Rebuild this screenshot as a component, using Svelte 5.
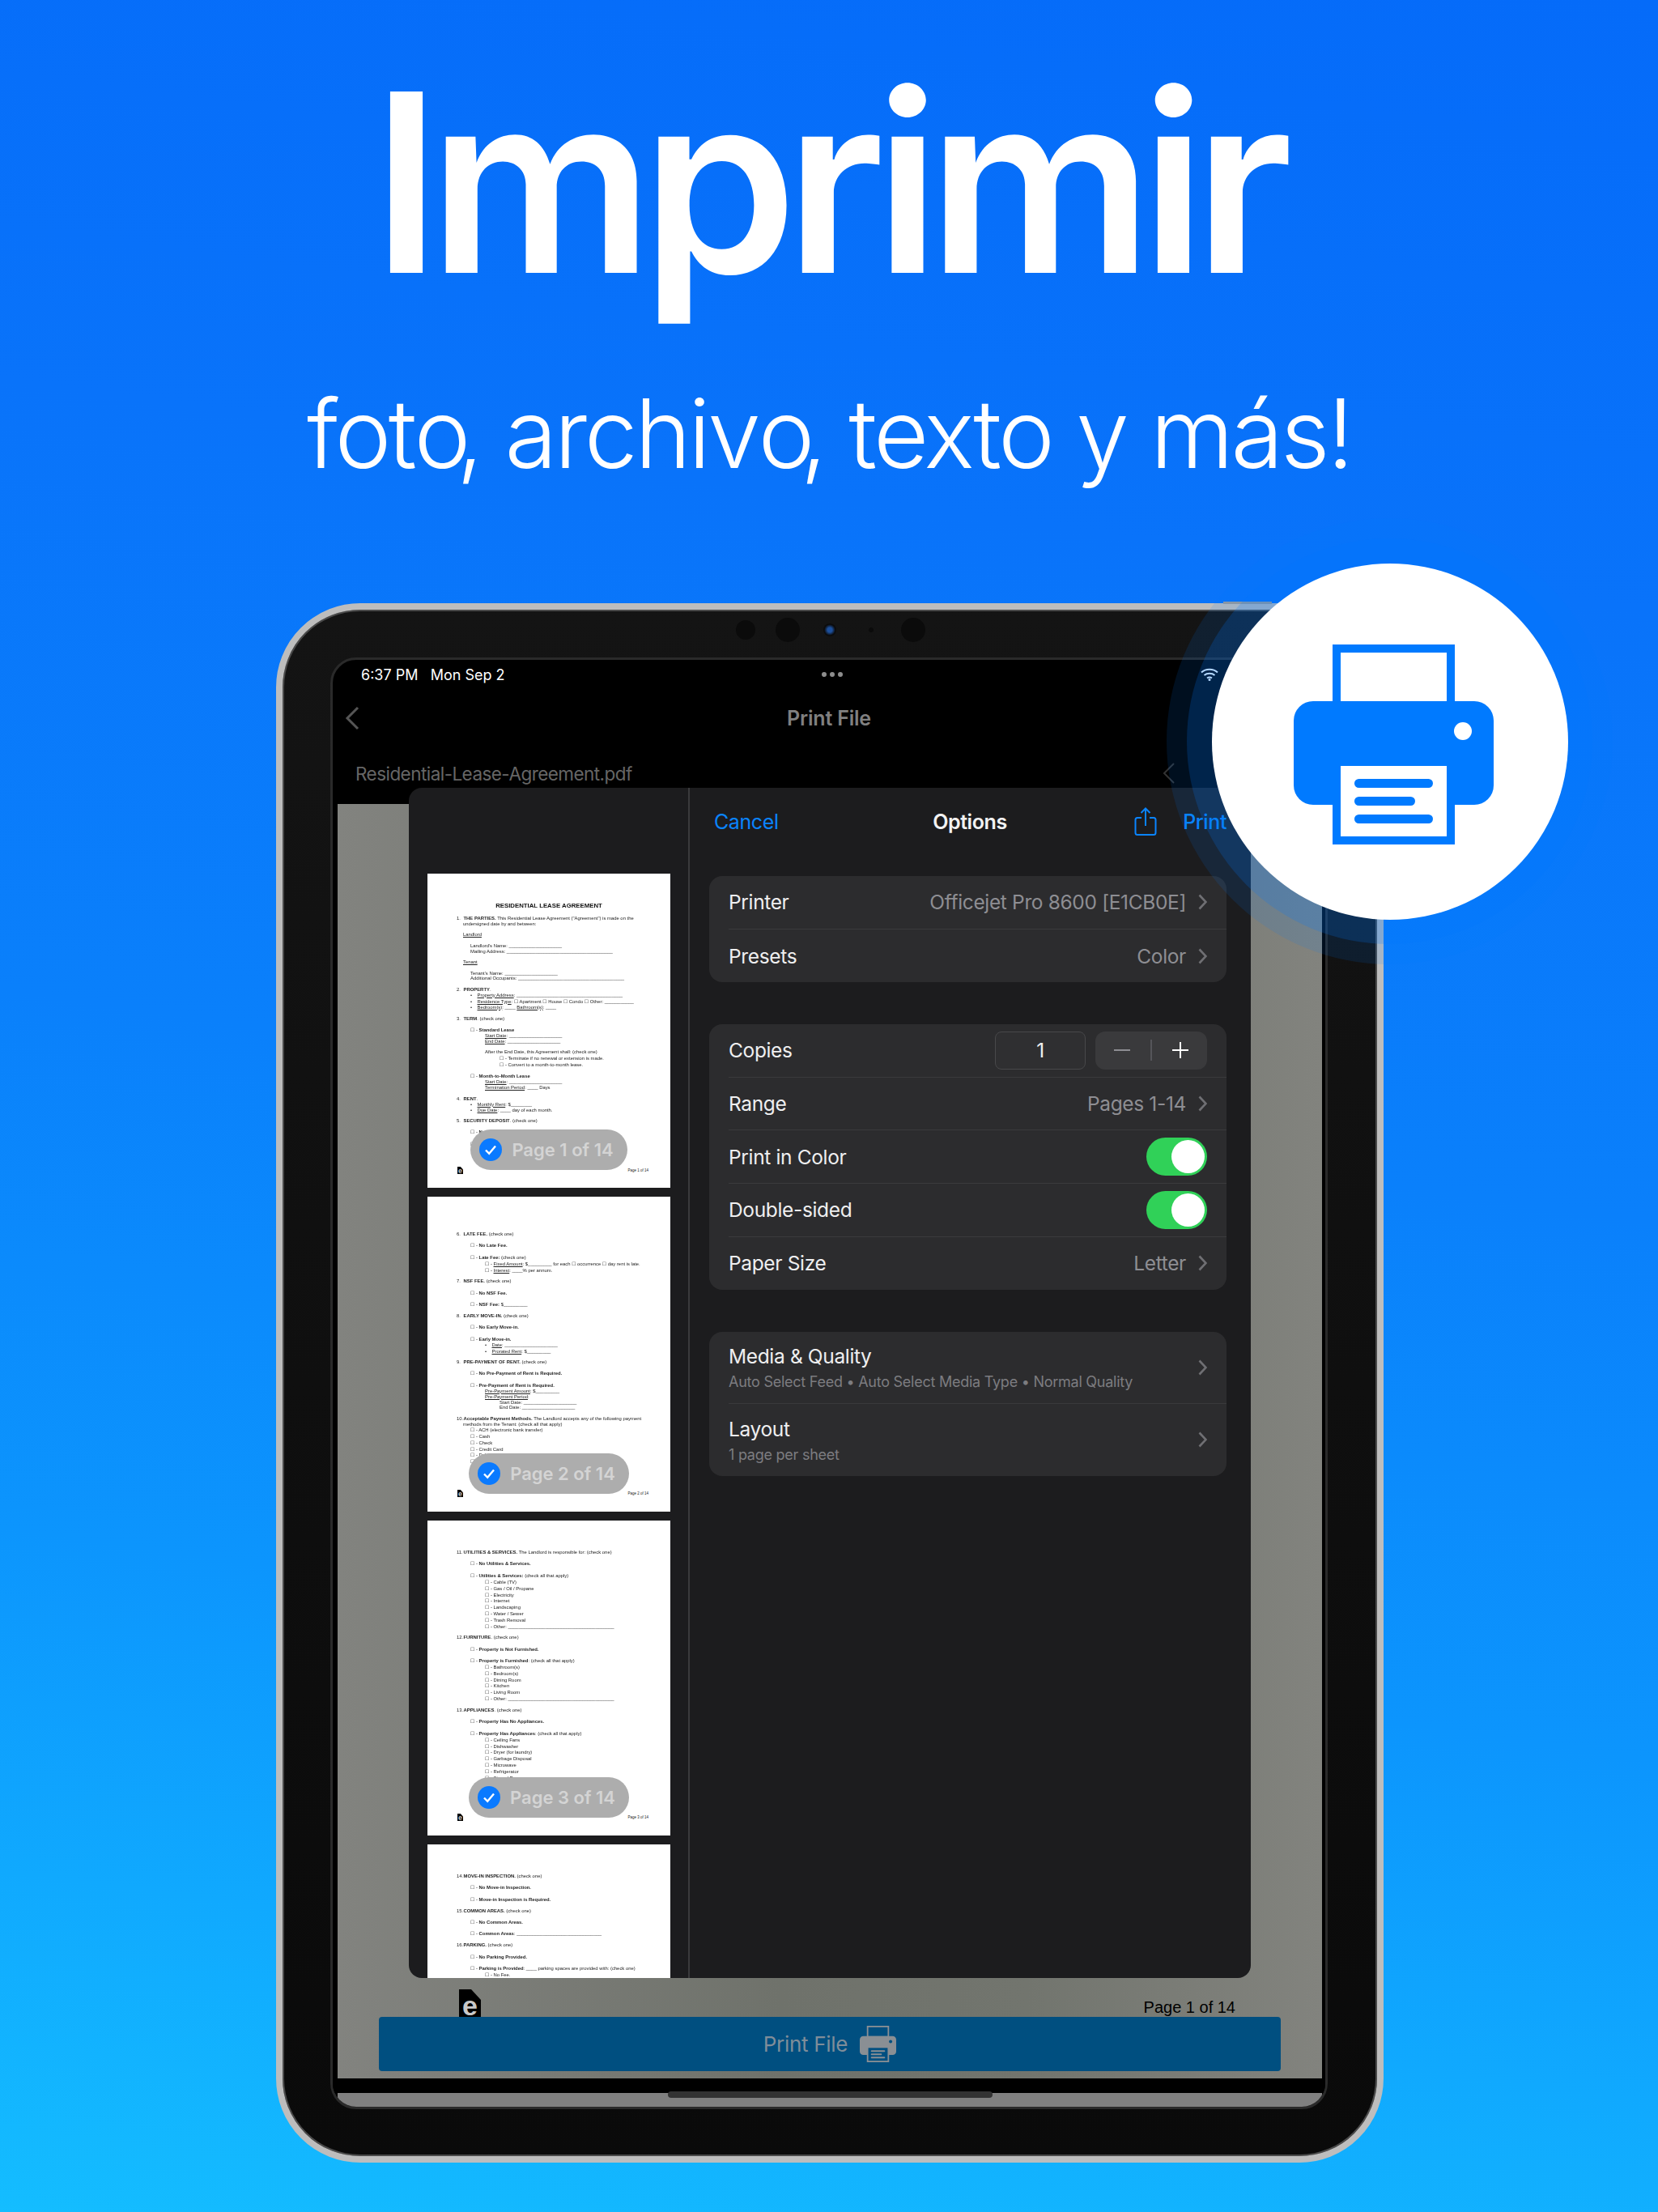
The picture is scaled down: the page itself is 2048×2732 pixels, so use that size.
<script lang="ts">
  type Line = [number, number, string, string?];

  const page1: Line[] = [
    [55, 36, '<b>THE PARTIES.</b> This Residential Lease Agreement ("Agreement") is made on the', '1.'],
    [62, 44, 'undersigned date by and between:'],
    [75, 44, '<u>Landlord</u>'],
    [89, 53, "Landlord's Name: ____________________"],
    [96, 53, 'Mailing Address: ________________________________________'],
    [109, 44, '<u>Tenant</u>'],
    [123, 53, "Tenant's Name: ____________________"],
    [129, 53, 'Additional Occupants: ________________________________________'],
    [143, 36, '<b>PROPERTY</b>.', '2.'],
    [150, 53, '<u>Property Address</u>: ________________________________________', '•'],
    [158, 53, '<u>Residence Type</u>: ☐ Apartment ☐ House ☐ Condo ☐ Other: ___________', '•'],
    [165, 53, '<u>Bedroom(s)</u>: ____ <u>Bathroom(s)</u>: ____', '•'],
    [179, 36, '<b>TERM</b>. (check one)', '3.'],
    [193, 53, '☐ - <b>Standard Lease</b>'],
    [200, 71, '<u>Start Date</u>: ____________________'],
    [207, 71, '<u>End Date</u>: ____________________'],
    [220, 71, 'After the End Date, this Agreement shall: (check one)'],
    [228, 89, '☐ - Terminate if no renewal or extension is made.'],
    [236, 89, '☐ - Convert to a month-to-month lease.'],
    [250, 53, '☐ - <b>Month-to-Month Lease</b>'],
    [257, 71, '<u>Start Date</u>: ____________________'],
    [264, 71, '<u>Termination Period</u>: ____ Days'],
    [278, 36, '<b>RENT</b>.', '4.'],
    [285, 53, '<u>Monthly Rent</u>: $________', '•'],
    [292, 53, '<u>Due Date</u>: ____ day of each month.', '•'],
    [305, 36, '<b>SECURITY DEPOSIT</b>. (check one)', '5.'],
    [319, 53, '☐ - <b>No Security Deposit.</b>'],
    [334, 53, '☐ - <b>Security Deposit</b>']
  ];

  const page2: Line[] = [
    [46, 36, '<b>LATE FEE.</b> (check one)', '6.'],
    [60, 53, '☐ - <b>No Late Fee.</b>'],
    [75, 53, '☐ - <b>Late Fee:</b> (check one)'],
    [83, 71, '☐ - <u>Fixed Amount</u>: $_________ for each ☐ occurrence ☐ day rent is late.'],
    [91, 71, '☐ - <u>Interest</u>: ____% per annum.'],
    [104, 36, '<b>NSF FEE.</b> (check one)', '7.'],
    [119, 53, '☐ - <b>No NSF Fee.</b>'],
    [133, 53, '☐ - <b>NSF Fee:</b> $_________'],
    [147, 36, '<b>EARLY MOVE-IN.</b> (check one)', '8.'],
    [161, 53, '☐ - <b>No Early Move-in.</b>'],
    [176, 53, '☐ - <b>Early Move-in.</b>'],
    [183, 71, '<u>Date</u>: ____________________', '•'],
    [191, 71, '<u>Prorated Rent</u>: $_________', '•'],
    [204, 36, '<b>PRE-PAYMENT OF RENT.</b> (check one)', '9.'],
    [218, 53, '☐ - <b>No Pre-Payment of Rent is Required.</b>'],
    [233, 53, '☐ - <b>Pre-Payment of Rent is Required.</b>'],
    [240, 71, '<u>Pre-Payment Amount</u>: $_________'],
    [247, 71, '<u>Pre-Payment Period</u>:'],
    [254, 89, 'Start Date: ____________________'],
    [260, 89, 'End Date: ____________________'],
    [274, 36, '<b>Acceptable Payment Methods.</b> The Landlord accepts any of the following payment', '10.'],
    [281, 44, 'methods from the Tenant: (check all that apply)'],
    [288, 53, '☐ - ACH (electronic bank transfer)'],
    [296, 53, '☐ - Cash'],
    [304, 53, '☐ - Check'],
    [312, 53, '☐ - Credit Card'],
    [319, 53, '☐ - Debit Card'],
    [327, 53, '☐ - Other']
  ];

  const page3: Line[] = [
    [39, 36, '<b>UTILITIES &amp; SERVICES.</b> The Landlord is responsible for: (check one)', '11.'],
    [53, 53, '☐ - <b>No Utilities &amp; Services.</b>'],
    [68, 53, '☐ - <b>Utilities &amp; Services:</b> (check all that apply)'],
    [76, 71, '☐ - Cable (TV)'],
    [84, 71, '☐ - Gas / Oil / Propane'],
    [92, 71, '☐ - Electricity'],
    [99, 71, '☐ - Internet'],
    [107, 71, '☐ - Landscaping'],
    [115, 71, '☐ - Water / Sewer'],
    [123, 71, '☐ - Trash Removal'],
    [131, 71, '☐ - Other: ________________________________________'],
    [144, 36, '<b>FURNITURE</b>. (check one)', '12.'],
    [159, 53, '☐ - <b>Property is Not Furnished.</b>'],
    [173, 53, '☐ - <b>Property is Furnished</b>: (check all that apply)'],
    [181, 71, '☐ - Bathroom(s)'],
    [189, 71, '☐ - Bedroom(s)'],
    [197, 71, '☐ - Dining Room'],
    [204, 71, '☐ - Kitchen'],
    [212, 71, '☐ - Living Room'],
    [220, 71, '☐ - Other: ________________________________________'],
    [234, 36, '<b>APPLIANCES</b>. (check one)', '13.'],
    [248, 53, '☐ - <b>Property Has No Appliances.</b>'],
    [263, 53, '☐ - <b>Property Has Appliances</b>: (check all that apply)'],
    [271, 71, '☐ - Ceiling Fans'],
    [279, 71, '☐ - Dishwasher'],
    [286, 71, '☐ - Dryer (for laundry)'],
    [294, 71, '☐ - Garbage Disposal'],
    [302, 71, '☐ - Microwave'],
    [310, 71, '☐ - Refrigerator'],
    [318, 71, '☐ - Stove / Range']
  ];

  const page4: Line[] = [
    [39, 36, '<b>MOVE-IN INSPECTION.</b> (check one)', '14.'],
    [53, 53, '☐ - <b>No Move-in Inspection.</b>'],
    [68, 53, '☐ - <b>Move-in Inspection is Required.</b>'],
    [82, 36, '<b>COMMON AREAS.</b> (check one)', '15.'],
    [96, 53, '☐ - <b>No Common Areas.</b>'],
    [110, 53, '☐ - <b>Common Areas</b>: ________________________________'],
    [124, 36, '<b>PARKING.</b> (check one)', '16.'],
    [139, 53, '☐ - <b>No Parking Provided.</b>'],
    [153, 53, '☐ - <b>Parking is Provided</b>: ____ parking spaces are provided with: (check one)'],
    [161, 71, '☐ - No Fee.']
  ];

  const pages = [
    { lines: page1, n: 1, title: true, height: 388 },
    { lines: page2, n: 2, title: false, height: 389 },
    { lines: page3, n: 3, title: false, height: 389 },
    { lines: page4, n: 4, title: false, height: 170 }
  ];

  const TITLE_BLOCK = 43.5;

  // the doc lines are listed by the y of their middle on the page
  function gapBefore(page: { lines: Line[]; title: boolean }, i: number) {
    if (i === 0) return page.lines[0][0] - 3.5 - (page.title ? TITLE_BLOCK : 0);
    return page.lines[i][0] - page.lines[i - 1][0] - 7;
  }
</script>

{#snippet printer(size: number, fg: string, bg: string)}
  <svg class="printer" width={size} height={size} viewBox="0 0 247 247" aria-hidden="true">
    <rect x="48" width="151" height="90" fill={fg} />
    <rect x="58" y="10" width="131" height="60" fill={bg} />
    <rect y="70" width="247" height="128" rx="24" fill={fg} />
    <circle cx="209" cy="107" r="11" fill={bg} />
    <rect x="48" y="150" width="151" height="97" fill={fg} />
    <rect x="58" y="150" width="131" height="87" fill={bg} />
    <rect x="75" y="166" width="97" height="11" rx="5.5" fill={fg} />
    <rect x="75" y="188" width="75" height="11" rx="5.5" fill={fg} />
    <rect x="75" y="210" width="97" height="11" rx="5.5" fill={fg} />
  </svg>
{/snippet}

{#snippet fileIcon(w: number, h: number)}
  <svg class="file-icon" width={w} height={h} viewBox="0 0 27 34" aria-hidden="true">
    <path d="M0 0h15l12 13v21H0z" fill="#000" />
    <text x="13.5" y="32" text-anchor="middle" font-family="Liberation Sans, sans-serif" font-weight="700" font-size="34" fill="#c8c8c8">e</text>
  </svg>
{/snippet}

{#snippet chevron()}
  <svg class="chev" width="11" height="20" viewBox="0 0 11 20" aria-hidden="true">
    <path d="M1.5 1.5 9.5 10l-8 8.5" fill="none" stroke="currentColor" stroke-width="2.6" />
  </svg>
{/snippet}

{#snippet toggle()}
  <span class="toggle"><span class="knob"></span></span>
{/snippet}

<main class="poster">
  <h1>Imprimir</h1>
  <p class="tagline">fot<span class="kern">o</span>, archiv<span class="kern">o</span>, texto y más!</p>

  <div class="device">
    <span class="cam" style="left: 560px; width: 24px; height: 24px"></span>
    <span class="cam" style="left: 609px; width: 30px; height: 30px"></span>
    <span class="cam lens" style="left: 668px; width: 16px; height: 16px"></span>
    <span class="cam" style="left: 724px; width: 6px; height: 6px"></span>
    <span class="cam" style="left: 764px; width: 30px; height: 30px"></span>

    <div class="screen">
      <div class="status">
        <span class="clock">6:37 PM&nbsp;&nbsp; Mon Sep 2</span>
        <span class="dots"><i></i><i></i><i></i></span>
        <svg class="wifi" width="22" height="16" viewBox="0 0 22 16" aria-hidden="true">
          <path d="M1 5.5C6.5.5 15.5.5 21 5.5M4.500 9c3.500-3 9.500-3 13 0M8 12.500c1.800-1.300 4.200-1.300 6 0" fill="none" stroke="#fff" stroke-width="2" />
          <circle cx="11" cy="14.500" r="1.500" fill="#fff" />
        </svg>
      </div>

      <div class="nav">
        <svg class="back" width="18" height="30" viewBox="0 0 18 30" aria-hidden="true">
          <path d="M16 2 3 15l13 13" fill="none" stroke="#555" stroke-width="3" />
        </svg>
        <span>Print File</span>
      </div>

      <div class="file-row">
        <span>Residential-Lease-Agreement.pdf</span>
        <svg width="16" height="28" viewBox="0 0 16 28" aria-hidden="true">
          <path d="M14 2 2 14l12 12" fill="none" stroke="#333" stroke-width="2" />
        </svg>
      </div>

      <div class="pane">
        <div class="pane-foot">
          {@render fileIcon(27, 34)}
          <span>Page 1 of 14</span>
        </div>
        <div class="print-btn">
          <span>Print File</span>
          {@render printer(45, '#8a8f94', '#004f80')}
        </div>
      </div>

      <div class="black-gap"></div>
      <div class="strip"><span class="home"></span></div>

      <section class="sheet">
        <div class="thumbs">
          {#each pages as page}
            <article class="page" style="height: {page.height}px">
              {#if page.title}
                <div class="doc-title">RESIDENTIAL LEASE AGREEMENT</div>
              {/if}
              <div class="doc">
                {#each page.lines as line, i}
                  <div class="doc-line" style="margin-top: {gapBefore(page, i)}px; padding-left: {line[1]}px">
                    {#if line[3]}<span class="num">{line[3]}</span>{/if}
                    <span>{@html line[2]}</span>
                  </div>
                {/each}
              </div>
              {#if page.n < 4}
                <div class="doc-foot">
                  {@render fileIcon(7, 9)}
                  <span>Page {page.n} of 14</span>
                </div>
                <div class="pill-wrap">
                  <div class="pill">
                    <svg width="28" height="28" viewBox="0 0 28 28" aria-hidden="true">
                      <circle cx="14" cy="14" r="14" fill="#0a7aff" />
                      <path d="m8 14.500 4.200 4.300L20 9.500" fill="none" stroke="#fff" stroke-width="2.400" />
                    </svg>
                    <span>Page {page.n} of 14</span>
                  </div>
                </div>
              {/if}
            </article>
          {/each}
        </div>

        <div class="options">
          <header class="opt-head">
            <span class="link">Cancel</span>
            <span class="opt-title">Options</span>
            <span class="opt-actions">
              <svg width="28" height="36" viewBox="0 0 28 36" aria-hidden="true">
                <path d="M9 13H4a2.500 2.500 0 0 0-2.500 2.500v16A2.500 2.500 0 0 0 4 34h20a2.500 2.500 0 0 0 2.500-2.500v-16A2.500 2.500 0 0 0 24 13h-5M14 23V1.500M8.500 7 14 1.500 19.500 7" fill="none" stroke="#0a84ff" stroke-width="2" />
              </svg>
              <span class="link strong">Print</span>
            </span>
          </header>

          <div class="group">
            <div class="row"><span>Printer</span><span class="val">Officejet Pro 8600 [E1CB0E]{@render chevron()}</span></div>
            <div class="row"><span>Presets</span><span class="val">Color{@render chevron()}</span></div>
          </div>

          <div class="group">
            <div class="row">
              <span>Copies</span>
              <span class="copies">
                <span class="count">1</span>
                <span class="stepper">
                  <svg width="20" height="2" viewBox="0 0 20 2" aria-hidden="true"><rect width="20" height="2" fill="#8e8e93" /></svg>
                  <i></i>
                  <svg width="20" height="20" viewBox="0 0 20 20" aria-hidden="true"><path d="M10 0v20M0 10h20" stroke="#fff" stroke-width="2" /></svg>
                </span>
              </span>
            </div>
            <div class="row"><span>Range</span><span class="val">Pages 1-14{@render chevron()}</span></div>
            <div class="row"><span>Print in Color</span>{@render toggle()}</div>
            <div class="row"><span>Double-sided</span>{@render toggle()}</div>
            <div class="row"><span>Paper Size</span><span class="val">Letter{@render chevron()}</span></div>
          </div>

          <div class="group">
            <div class="row tall">
              <span class="stack"><span>Media &amp; Quality</span><small>Auto Select Feed • Auto Select Media Type • Normal Quality</small></span>
              <span class="val">{@render chevron()}</span>
            </div>
            <div class="row tall">
              <span class="stack"><span>Layout</span><small>1 page per sheet</small></span>
              <span class="val">{@render chevron()}</span>
            </div>
          </div>
        </div>
      </section>
    </div>
  </div>

  <div class="badge">
    <div class="ring">
      <div class="disc">{@render printer(247, '#007aff', '#fff')}</div>
    </div>
  </div>
</main>

<style>
  :global(body) {
    margin: 0;
  }
  .poster {
    position: relative;
    width: 2048px;
    height: 2732px;
    overflow: hidden;
    display: flow-root;
    background: linear-gradient(188deg, #056bf9 0%, #0973fa 25%, #0a80fb 50%, #0c95fd 72%, #14bdff 100%);
    font-family: Inter, 'Noto Sans', sans-serif;
    color: #fff;
  }
  h1 {
    margin: 52px 0 0;
    height: 346px;
    padding-right: 6px;
    font-size: 308px;
    line-height: 346px;
    font-weight: 600;
    letter-spacing: -14.7px;
    text-align: center;
  }
  .tagline {
    margin: 62px 0 0;
    height: 150px;
    font-size: 118px;
    line-height: 150px;
    font-weight: 300;
    letter-spacing: -3.5px;
    text-align: center;
  }
  .kern {
    letter-spacing: -17.5px;
  }
  .device {
    position: relative;
    box-sizing: border-box;
    width: 1368px;
    height: 1926px;
    margin: 135px 0 0 341px;
    padding: 59px 61px 58px 59px;
    border: 8px solid #bdbdbd;
    border-radius: 104px;
    background: linear-gradient(#141414, #0a0a0a);
    box-shadow: inset 0 0 0 2px #4a4a4a;
  }
  .device::before {
    content: '';
    position: absolute;
    top: -10px;
    right: 130px;
    width: 60px;
    height: 3px;
    background: #9a9a9a;
  }
  .cam {
    position: absolute;
    top: 25px;
    transform: translate(0, -50%);
    border-radius: 50%;
    background: #0b0b0b;
  }
  .cam.lens {
    background: radial-gradient(#1c4f9c 25%, #0b0b0b 60%);
  }
  .screen {
    position: relative;
    box-sizing: border-box;
    height: 100%;
    display: flex;
    flex-direction: column;
    border: 3px solid #2a2a2a;
    border-radius: 32px;
    background: #000;
    overflow: hidden;
  }
  .status {
    flex: none;
    height: 36px;
    position: relative;
    display: flex;
    align-items: center;
    padding-left: 35px;
    font-size: 18px;
  }
  .dots {
    position: absolute;
    left: 604px;
    display: flex;
    gap: 4px;
  }
  .dots i {
    width: 6px;
    height: 6px;
    border-radius: 50%;
    background: #8d8d8d;
  }
  .wifi {
    position: absolute;
    left: 1072px;
  }
  .nav {
    flex: none;
    height: 72px;
    position: relative;
    display: flex;
    align-items: center;
    justify-content: center;
    font-size: 25px;
    letter-spacing: -0.2px;
    font-weight: 600;
    color: #808080;
  }
  .back {
    position: absolute;
    left: 15px;
  }
  .file-row {
    flex: none;
    height: 64px;
    margin-bottom: 6px;
    display: flex;
    align-items: center;
    justify-content: space-between;
    padding: 0 185px 0 28px;
    font-size: 22.5px;
    letter-spacing: -0.55px;
    color: #666;
  }
  .pane {
    flex: none;
    box-sizing: border-box;
    height: 1574px;
    margin: 0 4px 0 6px;
    display: flex;
    flex-direction: column;
    justify-content: flex-end;
    padding: 0 51px 9px;
    background: linear-gradient(90deg, #82837f 0%, #6f726b 45%, #72756e 70%, #82837e 100%);
  }
  .pane-foot {
    display: flex;
    justify-content: space-between;
    align-items: flex-end;
    padding: 0 56px 0 99px;
    font-family: 'Liberation Sans', sans-serif;
    font-size: 20px;
    color: #000;
  }
  .print-btn {
    position: relative;
    height: 67px;
    display: flex;
    align-items: center;
    justify-content: center;
    gap: 15px;
    border-radius: 4px;
    background: #004f80;
    font-size: 26px;
    letter-spacing: -0.3px;
    color: #7f8d99;
  }
  .black-gap {
    flex: none;
    height: 18px;
    background: #000;
  }
  .strip {
    flex: 1;
    position: relative;
    margin: 0 4px 0 6px;
    background: #808080;
  }
  .home {
    position: absolute;
    left: 408px;
    top: -2px;
    width: 401px;
    height: 8px;
    border-radius: 4px;
    background: #333;
  }
  .sheet {
    position: absolute;
    left: 94px;
    top: 158px;
    width: 1040px;
    height: 1470px;
    display: flex;
    border-radius: 16px;
    background: #1c1c1e;
    overflow: hidden;
  }
  .thumbs {
    flex: none;
    box-sizing: border-box;
    width: 347px;
    padding: 106px 24px 0 23px;
    display: flex;
    flex-direction: column;
    gap: 11px;
    border-right: 2px solid #3a3a3c;
    overflow: hidden;
  }
  .page {
    position: relative;
    flex: none;
    width: 300px;
    background: #fff;
    overflow: hidden;
    font-family: 'Liberation Sans', 'DejaVu Sans', sans-serif;
    color: #222;
  }
  .doc-title {
    padding-top: 36px;
    height: 7.5px;
    line-height: 7.5px;
    font-size: 7.8px;
    font-weight: 700;
    text-align: center;
    color: #111;
    filter: blur(0.3px);
  }
  .doc {
    filter: blur(0.35px);
  }
  .doc-line {
    display: flex;
    height: 7px;
    line-height: 7px;
    font-size: 5.9px;
    white-space: nowrap;
  }
  .num {
    flex: none;
    width: 8.5px;
  }
  .doc-foot {
    position: absolute;
    left: 37px;
    right: 27px;
    top: 362px;
    display: flex;
    justify-content: space-between;
    align-items: center;
    font-size: 4.5px;
  }
  .pill-wrap {
    position: absolute;
    left: 0;
    right: 0;
    bottom: 22px;
    display: flex;
    justify-content: center;
  }
  .pill {
    display: flex;
    align-items: center;
    gap: 12px;
    height: 50px;
    padding: 0 17px 0 11px;
    border-radius: 25px;
    background: #adadad;
    font-family: Inter, sans-serif;
    font-size: 22px;
    font-weight: 600;
    color: #d4d4d4;
  }
  .options {
    flex: 1;
    min-width: 0;
    padding: 0 30px 0 24px;
  }
  .opt-head {
    height: 84px;
    position: relative;
    display: flex;
    align-items: center;
    margin-bottom: 25px;
    justify-content: space-between;
    font-size: 25px;
    letter-spacing: -0.4px;
  }
  .link {
    color: #0a84ff;
    padding-left: 6px;
  }
  .link.strong {
    font-weight: 500;
  }
  .opt-title {
    position: absolute;
    left: 0;
    right: 0;
    padding-left: 5px;
    text-align: center;
    font-weight: 600;
    color: #f2f2f2;
  }
  .opt-actions {
    position: relative;
    display: flex;
    align-items: center;
    gap: 26px;
  }
  .group {
    margin-bottom: 51.5px;
    border-radius: 16px;
    background: #2c2c2e;
    overflow: hidden;
  }
  .row {
    box-sizing: border-box;
    height: 65.7px;
    margin-left: 24px;
    padding-right: 24px;
    display: flex;
    align-items: center;
    justify-content: space-between;
    border-bottom: 1.5px solid #3a3a3c;
    font-size: 24.5px;
    letter-spacing: -0.35px;
    color: #efeff0;
  }
  .row:last-child {
    border-bottom: 0;
  }
  .row.tall {
    height: 89px;
  }
  .val {
    display: flex;
    align-items: center;
    gap: 15px;
    color: #8e8e93;
  }
  .chev {
    color: #6f6f73;
  }
  .stack {
    display: flex;
    flex-direction: column;
    gap: 6px;
  }
  .stack small {
    font-size: 18px;
    letter-spacing: -0.25px;
    color: #7c7c80;
  }
  .copies {
    display: flex;
    gap: 12px;
  }
  .count {
    box-sizing: border-box;
    width: 112px;
    height: 47px;
    display: flex;
    align-items: center;
    justify-content: center;
    border: 1.5px solid #48484a;
    border-radius: 8px;
    background: #2f2f31;
  }
  .stepper {
    width: 138px;
    height: 47px;
    display: flex;
    align-items: center;
    justify-content: center;
    gap: 25px;
    border-radius: 12px;
    background: #3a3a3c;
  }
  .stepper i {
    width: 1.5px;
    height: 26px;
    background: #55555a;
  }
  .toggle {
    box-sizing: border-box;
    width: 75px;
    height: 47px;
    padding: 3px;
    display: flex;
    justify-content: flex-end;
    border-radius: 24px;
    background: #30d158;
  }
  .knob {
    width: 41px;
    height: 41px;
    border-radius: 50%;
    background: #fff;
  }
  .badge {
    position: absolute;
    left: 1441px;
    top: 640px;
    width: 551px;
    height: 551px;
    display: flex;
    align-items: center;
    justify-content: center;
    border-radius: 50%;
    background: rgba(0, 120, 255, 0.12);
  }
  .ring {
    width: 501px;
    height: 501px;
    display: flex;
    align-items: center;
    justify-content: center;
    border-radius: 50%;
    background: rgba(0, 120, 255, 0.2);
  }
  .disc {
    box-sizing: border-box;
    width: 440px;
    height: 440px;
    padding: 8px 0 0 10px;
    display: flex;
    align-items: center;
    justify-content: center;
    border-radius: 50%;
    background: #fff;
  }
  .printer,
  .file-icon {
    display: block;
    flex: none;
    overflow: visible;
  }
</style>
